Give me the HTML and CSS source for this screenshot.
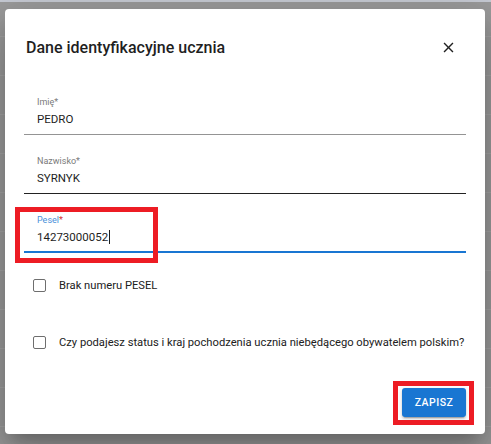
FILE: index.html
```html
<!DOCTYPE html>
<html lang="pl">
<head>
<meta charset="utf-8">
<title>Dane identyfikacyjne ucznia</title>
<link rel="stylesheet" href="styles.css">
</head>
<body>
<div class="topstrip"></div>
<div class="backdrop">
  <div class="dialog" role="dialog">
    <header class="title-row">
      <h2 class="title">Dane identyfikacyjne ucznia</h2>
      <button class="close" aria-label="Zamknij">
        <svg viewBox="0 0 24 24" width="17" height="17"><path d="M19 6.41L17.59 5 12 10.59 6.41 5 5 6.41 10.59 12 5 17.59 6.41 19 12 13.41 17.59 19 19 17.59 13.41 12z" fill="#222"/></svg>
      </button>
    </header>
    <div class="content">
      <div class="field">
        <label class="label">Imię*</label>
        <div class="value">PEDRO</div>
      </div>
      <div class="field field-hover">
        <label class="label">Nazwisko*</label>
        <div class="value">SYRNYK</div>
      </div>
      <div class="field field-focus">
        <label class="label label-focus">Pesel<span class="req">*</span></label>
        <div class="value">14273000052<span class="caret"></span></div>
        <span class="mark mark-field"></span>
      </div>
      <div class="check-row first">
        <span class="box"></span>
        <span class="check-label">Brak numeru PESEL</span>
      </div>
      <div class="check-row second">
        <span class="box"></span>
        <span class="check-label">Czy podajesz status i kraj pochodzenia ucznia niebędącego obywatelem polskim?</span>
      </div>
    </div>
    <footer class="actions">
      <div class="save-wrap">
        <button class="save">ZAPISZ</button>
        <span class="mark mark-button"></span>
      </div>
    </footer>
  </div>
</div>
</body>
</html>
```
FILE: styles.css
```css
html, body {
  margin: 0;
  padding: 0;
}
body {
  width: 491px;
  height: 444px;
  overflow: hidden;
  background: #9b9b9b;
  font-family: Roboto, "Liberation Sans", sans-serif;
}
.topstrip {
  height: 2px;
  background: #c7cbd4;
}
.backdrop {
  height: 442px;
  background-color: #9b9b9b;
  background-image: repeating-linear-gradient(to bottom, transparent 0, transparent 34px, #a4a4a4 34px, #a4a4a4 35px, transparent 35px, transparent 39px);
  padding-top: 7px;
  box-sizing: border-box;
}
.dialog {
  margin-left: 5px;
  width: 480px;
  height: 425px;
  background: #fff;
  border-radius: 4px;
  box-shadow: 0 11px 15px -7px rgba(0,0,0,0.2), 0 24px 38px 3px rgba(0,0,0,0.14), 0 9px 46px 8px rgba(0,0,0,0.12);
  display: flex;
  flex-direction: column;
  box-sizing: border-box;
}
.title-row {
  display: flex;
  justify-content: space-between;
  align-items: center;
  padding: 27px 28px 0 21px;
}
.title {
  margin: 0;
  font-size: 16px;
  line-height: 24px;
  font-weight: 500;
  color: #1f1f1f;
}
.close {
  border: 0;
  background: none;
  padding: 0;
  width: 17px;
  height: 17px;
  margin-top: -2px;
  display: flex;
}
.content {
  padding: 37px 19px 0 19px;
  display: flex;
  flex-direction: column;
}
.field {
  position: relative;
  display: flex;
  flex-direction: column;
  padding-left: 13px;
  padding-bottom: 7px;
  border-bottom: 1px solid #949494;
  margin-bottom: 21px;
}
.field-hover {
  border-bottom-color: #222;
}
.field-focus {
  border-bottom: 2px solid #1976d2;
  padding-bottom: 6px;
  margin-bottom: 0;
}
.label {
  font-size: 9px;
  line-height: 11px;
  color: #7a7a7a;
  margin-bottom: 3px;
}
.label-focus {
  color: #4a90d9;
}
.req {
  color: #d32f2f;
}
.value {
  font-size: 11.5px;
  line-height: 16px;
  color: #1e1e1e;
  display: flex;
  align-items: center;
}
.caret {
  display: inline-block;
  width: 1px;
  height: 14px;
  background: #1e1e1e;
  margin-left: 1px;
}
.mark {
  position: absolute;
  border: 5px solid #ed1c24;
  pointer-events: none;
}
.mark-field {
  left: -9px;
  top: -8px;
  width: 133px;
  height: 46px;
}
.check-row {
  display: flex;
  align-items: center;
  height: 30px;
  padding-left: 9px;
}
.check-row.first {
  margin-top: 17px;
}
.check-row.second {
  margin-top: 27px;
}
.box {
  width: 11px;
  height: 11px;
  border: 1.6px solid #6e6e6e;
  border-radius: 2px;
  flex: none;
}
.check-label {
  margin-left: 13px;
  font-size: 11.2px;
  color: #212121;
  white-space: nowrap;
}
.actions {
  margin-top: auto;
  display: flex;
  justify-content: flex-end;
  padding: 0 19px 17px 0;
}
.save-wrap {
  position: relative;
  display: flex;
}
.save {
  width: 64px;
  height: 29px;
  border: 0;
  border-radius: 3px;
  background: #1976d2;
  color: #fff;
  font-family: Roboto, "Liberation Sans", sans-serif;
  font-weight: 500;
  font-size: 10.5px;
  letter-spacing: 0.5px;
  box-shadow: 0 3px 1px -2px rgba(0,0,0,0.2), 0 2px 2px 0 rgba(0,0,0,0.14), 0 1px 5px 0 rgba(0,0,0,0.12);
  padding: 0;
}
.mark-button {
  left: -9px;
  top: -7px;
  right: -8px;
  bottom: -8px;
}
```
